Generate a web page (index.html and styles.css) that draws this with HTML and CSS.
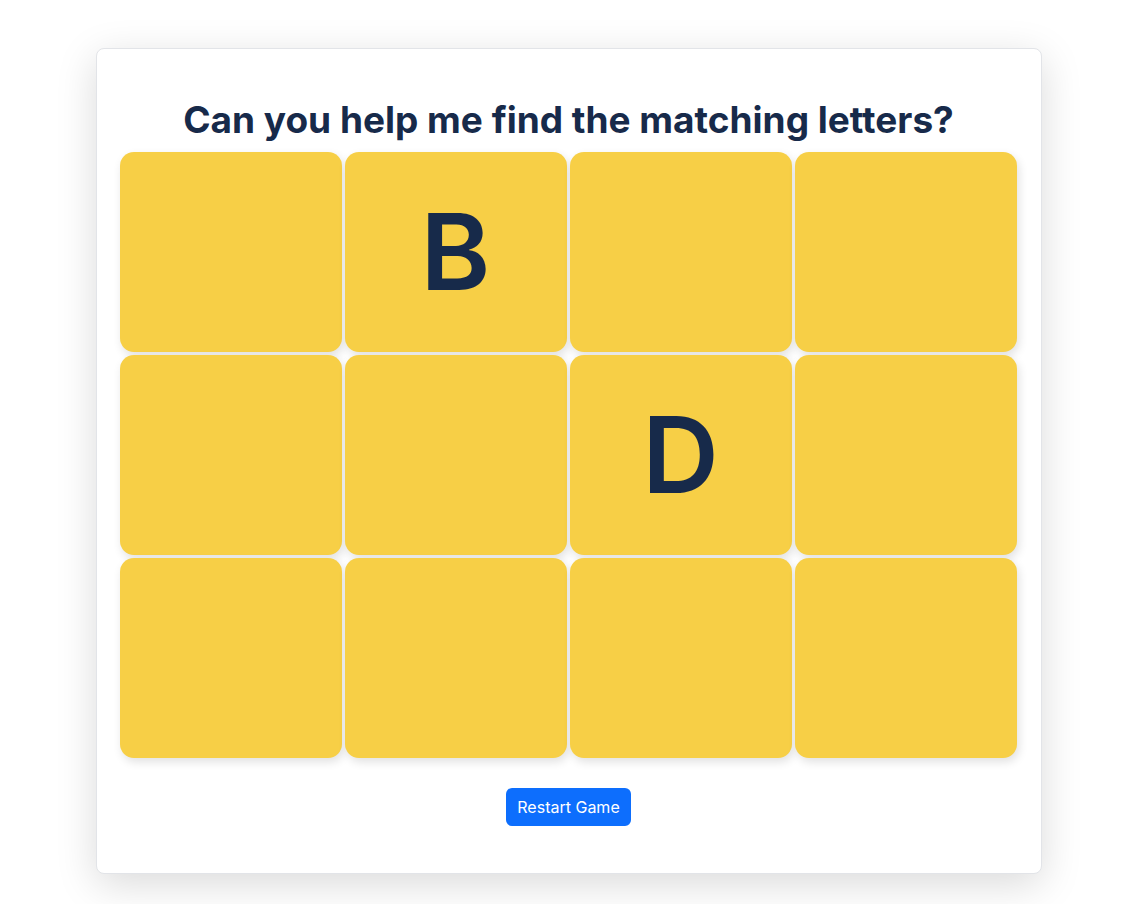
FILE: index.html
```html
<!DOCTYPE html>
<html lang="en">
<head>
<meta charset="utf-8">
<title>Memory Game</title>
<link rel="stylesheet" href="styles.css">
</head>
<body>
  <main class="game">
    <h1 class="title">Can you help me find the matching letters?</h1>
    <div class="board">
      <div class="tile"></div>
      <div class="tile"><span class="letter">B</span></div>
      <div class="tile"></div>
      <div class="tile"></div>
      <div class="tile"></div>
      <div class="tile"></div>
      <div class="tile"><span class="letter">D</span></div>
      <div class="tile"></div>
      <div class="tile"></div>
      <div class="tile"></div>
      <div class="tile"></div>
      <div class="tile"></div>
    </div>
    <div class="actions">
      <button class="restart" type="button">Restart Game</button>
    </div>
  </main>
</body>
</html>
```
FILE: styles.css
```css
* { box-sizing: border-box; }
html, body { margin: 0; padding: 0; background: #ffffff; }
body {
  font-family: Inter, "Liberation Sans", sans-serif;
  padding: 48px 0 30px;
}
.game {
  width: 946px;
  margin: 0 auto;
  background: #fff;
  border: 1px solid #e2e4e8;
  border-radius: 8px;
  box-shadow: 0 10px 40px rgba(0, 0, 0, 0.15);
  padding: 39px 23px 47px;
}
.title {
  margin: 0;
  text-align: center;
  color: #172a4a;
  font-size: 37px;
  font-weight: 700;
  line-height: 64px;
}
.board {
  display: grid;
  grid-template-columns: repeat(4, 222px);
  grid-auto-rows: 200px;
  gap: 3px;
}
.tile {
  background: #f7cf46;
  border-radius: 14px;
  box-shadow: 2px 4px 10px rgba(0, 0, 0, 0.12);
  display: flex;
  align-items: center;
  justify-content: center;
}
.letter {
  font-family: Inter, "Noto Sans", sans-serif;
  font-size: 106px;
  font-weight: 600;
  color: #172a4a;
  line-height: 1;
}
.actions {
  display: flex;
  justify-content: center;
  margin-top: 30px;
}
.restart {
  font-family: Inter, "Liberation Sans", sans-serif;
  font-size: 16px;
  line-height: 24px;
  padding: 7px 11px;
  color: #fff;
  background: #0d6efd;
  border: none;
  border-radius: 6px;
  font-weight: 400;
}
```
